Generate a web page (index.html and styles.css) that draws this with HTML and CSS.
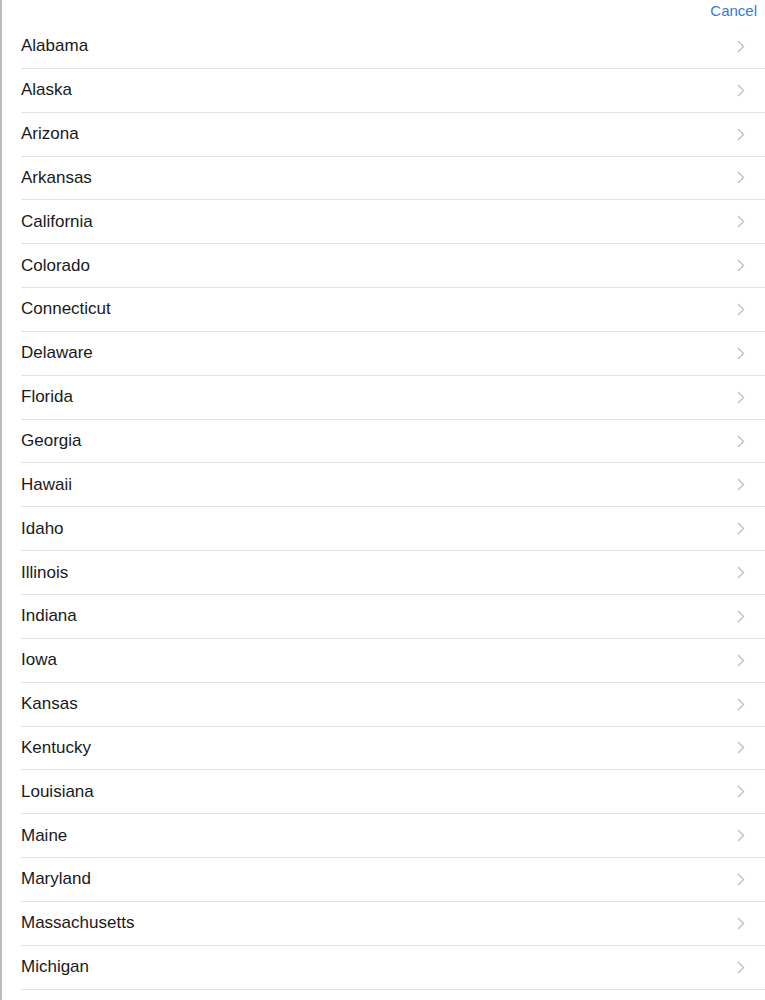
FILE: index.html
```html
<!DOCTYPE html>
<html>
<head>
<meta charset="utf-8">
<link rel="stylesheet" href="styles.css">
</head>
<body>
<div class="page">
  <header class="topbar"><span class="cancel">Cancel</span></header>
  <ul class="list">
    <li class="row"><span>Alabama</span><svg class="chev" viewBox="0 0 8 13"><path d="M1 1 L6.5 6.5 L1 12"/></svg></li>
    <li class="row"><span>Alaska</span><svg class="chev" viewBox="0 0 8 13"><path d="M1 1 L6.5 6.5 L1 12"/></svg></li>
    <li class="row"><span>Arizona</span><svg class="chev" viewBox="0 0 8 13"><path d="M1 1 L6.5 6.5 L1 12"/></svg></li>
    <li class="row"><span>Arkansas</span><svg class="chev" viewBox="0 0 8 13"><path d="M1 1 L6.5 6.5 L1 12"/></svg></li>
    <li class="row"><span>California</span><svg class="chev" viewBox="0 0 8 13"><path d="M1 1 L6.5 6.5 L1 12"/></svg></li>
    <li class="row"><span>Colorado</span><svg class="chev" viewBox="0 0 8 13"><path d="M1 1 L6.5 6.5 L1 12"/></svg></li>
    <li class="row"><span>Connecticut</span><svg class="chev" viewBox="0 0 8 13"><path d="M1 1 L6.5 6.5 L1 12"/></svg></li>
    <li class="row"><span>Delaware</span><svg class="chev" viewBox="0 0 8 13"><path d="M1 1 L6.5 6.5 L1 12"/></svg></li>
    <li class="row"><span>Florida</span><svg class="chev" viewBox="0 0 8 13"><path d="M1 1 L6.5 6.5 L1 12"/></svg></li>
    <li class="row"><span>Georgia</span><svg class="chev" viewBox="0 0 8 13"><path d="M1 1 L6.5 6.5 L1 12"/></svg></li>
    <li class="row"><span>Hawaii</span><svg class="chev" viewBox="0 0 8 13"><path d="M1 1 L6.5 6.5 L1 12"/></svg></li>
    <li class="row"><span>Idaho</span><svg class="chev" viewBox="0 0 8 13"><path d="M1 1 L6.5 6.5 L1 12"/></svg></li>
    <li class="row"><span>Illinois</span><svg class="chev" viewBox="0 0 8 13"><path d="M1 1 L6.5 6.5 L1 12"/></svg></li>
    <li class="row"><span>Indiana</span><svg class="chev" viewBox="0 0 8 13"><path d="M1 1 L6.5 6.5 L1 12"/></svg></li>
    <li class="row"><span>Iowa</span><svg class="chev" viewBox="0 0 8 13"><path d="M1 1 L6.5 6.5 L1 12"/></svg></li>
    <li class="row"><span>Kansas</span><svg class="chev" viewBox="0 0 8 13"><path d="M1 1 L6.5 6.5 L1 12"/></svg></li>
    <li class="row"><span>Kentucky</span><svg class="chev" viewBox="0 0 8 13"><path d="M1 1 L6.5 6.5 L1 12"/></svg></li>
    <li class="row"><span>Louisiana</span><svg class="chev" viewBox="0 0 8 13"><path d="M1 1 L6.5 6.5 L1 12"/></svg></li>
    <li class="row"><span>Maine</span><svg class="chev" viewBox="0 0 8 13"><path d="M1 1 L6.5 6.5 L1 12"/></svg></li>
    <li class="row"><span>Maryland</span><svg class="chev" viewBox="0 0 8 13"><path d="M1 1 L6.5 6.5 L1 12"/></svg></li>
    <li class="row"><span>Massachusetts</span><svg class="chev" viewBox="0 0 8 13"><path d="M1 1 L6.5 6.5 L1 12"/></svg></li>
    <li class="row"><span>Michigan</span><svg class="chev" viewBox="0 0 8 13"><path d="M1 1 L6.5 6.5 L1 12"/></svg></li>
  </ul>
</div>
</body>
</html>
```

FILE: styles.css
```css
html, body {
  margin: 0;
  padding: 0;
  background: #ffffff;
  overflow: hidden;
}
body {
  font-family: "Liberation Sans", Arial, sans-serif;
  color: #1a1a1a;
}
.page {
  height: 1000px;
  overflow: hidden;
  border-left: 2px solid #bcbcbc;
  box-sizing: border-box;
}
.topbar {
  height: 25px;
  display: flex;
  justify-content: flex-end;
  align-items: center;
  padding-right: 8px;
  box-sizing: border-box;
}
.cancel {
  font-size: 15px;
  color: #2e7fd8;
  line-height: 1;
  margin-top: -4px;
}
.list {
  list-style: none;
  margin: 0;
  padding: 0 0 0 19px;
}
.row {
  height: 43.857px;
  box-sizing: border-box;
  border-bottom: 1px solid #e3e3e6;
  display: flex;
  align-items: center;
  justify-content: space-between;
  padding-right: 20px;
  font-size: 17px;
}
.chev {
  width: 8px;
  height: 13px;
  fill: none;
  stroke: #c4c4c8;
  stroke-width: 1.5;
}
```
